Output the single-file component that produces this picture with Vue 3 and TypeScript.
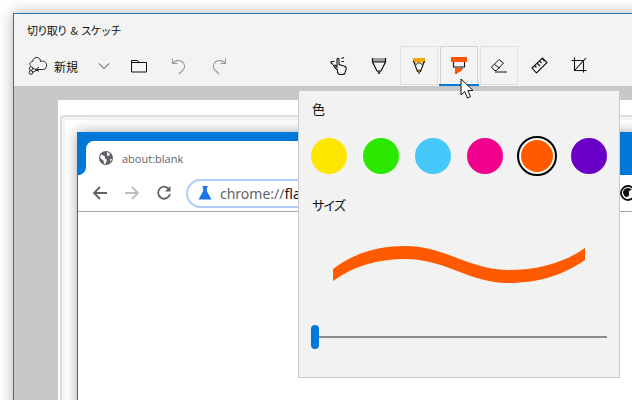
<script setup lang="ts">
const colors: { c: string; sel?: boolean }[] = [
  { c: '#ffe600' },
  { c: '#2ae800' },
  { c: '#45c8fa' },
  { c: '#f0008c' },
  { c: '#ff5a00', sel: true },
  { c: '#6a00c8' },
]
</script>

<template>
  <div class="page">
    <div class="window">
      <header class="head">
        <div class="title">切り取り &amp; スケッチ</div>
        <div class="toolbar">
          <div class="left">
            <svg class="new-icon" width="22" height="20" viewBox="0 0 22 20" fill="none" stroke="#222" stroke-width="1">
              <path d="M3.500 9.500C2 7.500 3.500 5.500 5.500 5.500C6 2.500 8.500 1 10.500 1.500C12.500 2 13.500 3.500 13.500 5.500C16 4.500 19 5.500 19.500 8.500C20 11 18.500 13.500 16.500 13.500H8.500" />
              <path d="M12 11L9 13.500L12 15.500" />
              <circle cx="4" cy="12.500" r="1.800" />
              <circle cx="4" cy="16.500" r="1.800" />
              <path d="M5.500 12L10 14M5.500 16.500L10 14" />
            </svg>
            <span class="new-label">新規</span>
            <div class="cell chev">
              <svg width="12" height="8" viewBox="0 0 12 8" fill="none" stroke="#333"><path d="M1 1.500L6 6.500L11 1.500" /></svg>
            </div>
            <div class="cell">
              <svg width="18" height="14" viewBox="0 0 18 14" fill="none" stroke="#111"><path d="M1.500 13V1.500H7.500L9 3.500H16.500V13ZM1.500 3.500H9" /></svg>
            </div>
            <div class="cell">
              <svg width="16" height="18" viewBox="0 0 16 18" fill="none" stroke="#999" stroke-width="1.100"><path d="M1.500 1.500V6.500H6.500M1.500 6.500C4 3.500 8 2.500 11 4.500C15 7.500 14 11 12 13L8 17" /></svg>
            </div>
            <div class="cell">
              <svg width="16" height="18" viewBox="0 0 16 18" fill="none" stroke="#999" stroke-width="1.100"><path d="M14.500 1.500V6.500H9.500M14.500 6.500C12 3.500 8 2.500 5 4.500C1 7.500 2 11 4 13L8 17" /></svg>
            </div>
          </div>
          <div class="tools">
            <div class="tool">
              <svg width="18" height="18" viewBox="0 0 18 18" fill="none" stroke="#111" stroke-width="1.100"><path d="M7.500 13L4 9.500C3 8.500 4.500 7.500 5.500 8.500L7 10V2.500C7 1 9 1 9 2.500V7.500L14 9C16 9.500 16.500 10.500 16 12.500L15 16C14.500 17.500 13.500 17.500 12.500 17.500H9.500C8.500 17.500 8 16 7.500 15.500ZM1 4.500H4.500M1 4.500C.5 6 2 7 3 7.500M11.500 1.500L14 .5M11.500 4.500H14" /></svg>
            </div>
            <div class="tool">
              <svg width="16" height="18" viewBox="0 0 16 18" fill="none"><rect x="1" y="1" width="14" height="4" fill="#a0a0a0" /><path d="M1.500 1V5L6 14H10L14.500 5V1" stroke="#111" stroke-width="1.200" /><path d="M1.500 5H14.500" stroke="#111" /><path d="M6.500 14H9.500L9 17H7Z" fill="#444" /></svg>
            </div>
            <div class="tool boxed">
              <svg width="14" height="18" viewBox="0 0 14 18" fill="none"><rect x="1" y="1" width="12" height="4.500" fill="#f7a800" /><path d="M1.500 4L5.500 14.500H8.500L12.500 4" stroke="#111" stroke-width="1.100" /><path d="M2 5.500L4 7.500L7 5.500L10 7.500L12 5.500" stroke="#111" stroke-width=".8" /><path d="M5.500 13H8.500L7 17Z" fill="#f7a800" stroke="#111" stroke-width=".6" /></svg>
            </div>
            <div class="tool boxed active">
              <svg width="16" height="18" viewBox="0 0 16 18" fill="none"><rect y="0" width="16" height="5" fill="#ff5500" /><path d="M2.500 5V10H13.500V5" stroke="#111" stroke-width="1.100" /><path d="M5 10.500V17M11 10.500V12" stroke="#111" stroke-width="1" /><path d="M5 11H11V13.500L5 17Z" fill="#ff5500" /></svg>
            </div>
            <div class="tool boxed">
              <svg width="18" height="15" viewBox="0 0 18 15" fill="none" stroke="#111" stroke-width="1"><path d="M1.500 9L9 1.500L13.500 5L6.500 12.500H4.500ZM4.500 6.500L9.500 10M5 14H17" /></svg>
            </div>
            <div class="tool">
              <svg width="17" height="17" viewBox="0 0 17 17" fill="none" stroke="#111" stroke-width="1.100"><path d="M1 11L11.500 1L16 5.500L5.500 16ZM4 9L5.500 10.500M6.500 6.500L9 9M9 4.500L10.500 6M11.500 2L13.500 4" /></svg>
            </div>
            <div class="tool">
              <svg width="16" height="17" viewBox="0 0 16 17" fill="none" stroke="#111" stroke-width="1.100"><path d="M.5 3.500H12.500V15.500M3.500 .5V13.500H15.500M3.500 13.500L15 1" /></svg>
            </div>
          </div>
        </div>
      </header>

      <main class="canvas">
        <div class="sheet">
          <div class="frame">
            <div class="mat">
              <div class="chrome">
                <div class="strip">
                  <div class="tab">
                    <svg width="14" height="14" viewBox="0 0 14 14"><circle cx="7" cy="7" r="7" fill="#5f6368" /><path d="M2 3.500L5.500 5L6 7.500L8 9L6.500 13L5 12.500L4.500 9.500L1 7ZM8 1L11 2.500L10 5L8 4.500Z M11 8L13 8L11.500 11Z" fill="#fff" /></svg>
                    <span class="tab-text">about:blank</span>
                  </div>
                </div>
                <div class="nav">
                  <svg class="nav-icon" width="16" height="16" viewBox="0 0 16 16" fill="none" stroke="#5f6368" stroke-width="1.800"><path d="M15 8H2M8 2L2 8L8 14" /></svg>
                  <svg class="nav-icon" width="16" height="16" viewBox="0 0 16 16" fill="none" stroke="#bdbdbd" stroke-width="1.800"><path d="M1 8H14M8 2L14 8L8 14" /></svg>
                  <svg class="nav-icon" width="16" height="16" viewBox="0 0 16 16" fill="none"><path d="M13.500 5A6 6 0 1 0 14 9" stroke="#5f6368" stroke-width="1.800" /><path d="M14.500 1V6.500H9Z" fill="#5f6368" /></svg>
                  <div class="url">
                    <svg width="14" height="14" viewBox="0 0 14 14"><path d="M4.500 0H9.500V1.500H8.800V5L13.500 13.500H.5L5.200 5V1.500H4.500Z" fill="#1a73e8" /></svg>
                    <span class="url-text"><span class="scheme">chrome://</span>flags</span>
                  </div>
                  <svg class="ext" width="16" height="16" viewBox="0 0 16 16"><circle cx="8" cy="8" r="7" fill="#fff" stroke="#111" stroke-width="1.800" /><path d="M3 8A5 5 0 0 1 12 5C9.500 5 8.500 6 9 8.500C10 11.500 6 13 4.500 11Z" fill="#111" /></svg>
                </div>
                <div class="content"></div>
              </div>
            </div>
          </div>
        </div>
      </main>
    </div>

    <section class="popup">
      <div class="label">色</div>
      <div class="swatches">
        <div v-for="s in colors" :key="s.c" class="swatch" :class="{ selected: s.sel }">
          <span class="dot" :style="{ background: s.c }"></span>
        </div>
      </div>
      <div class="label size-label">サイズ</div>
      <svg class="stroke" width="252" height="42" viewBox="333 244 252 42">
        <path d="M333 269C355 252 380 246 405 246C445 246 470 270 508 270C540 270 565 262 585 248V260C565 274 540 283 508 283C470 283 445 259 405 259C380 259 355 265 333 281Z" fill="#ff5a00" />
      </svg>
      <div class="slider">
        <span class="thumb"></span>
        <span class="track"></span>
      </div>
    </section>

    <svg class="cursor" width="15" height="22" viewBox="0 0 15 22">
      <path d="M1 1V17L4.800 13.500L7.500 20L10.500 18.700L7.800 12.500H13Z" fill="#fff" stroke="#111" stroke-width="1" />
    </svg>
  </div>
</template>

<style>
html, body { margin: 0; background: #fff; }
</style>

<style scoped>
.page {
  position: relative;
  width: 632px;
  height: 400px;
  overflow: hidden;
  background: #fff;
  font-family: "Noto Sans CJK JP", "Noto Sans", sans-serif;
  color: #111;
}
.window {
  position: absolute;
  left: 13px;
  top: 13px;
  width: 640px;
  height: 400px;
  display: flex;
  flex-direction: column;
  border: 1px solid #1f74b8;
  box-shadow: 0 0 14px rgba(0, 0, 0, .3);
}
.head {
  height: 72px;
  flex: none;
  background: #f3f3f3;
  padding-left: 13px;
}
.title {
  font-size: 11px;
  letter-spacing: -1.1px;
  word-spacing: 2.5px;
  line-height: 16px;
  padding-top: 8px;
  height: 16px;
}
.toolbar {
  display: flex;
  margin-top: 8px;
  height: 39px;
}
.left {
  display: flex;
  align-items: center;
  width: 293px;
  height: 40px;
}
.new-icon { flex: none; }
.new-label {
  font-size: 12px;
  margin-left: 5px;
  width: 38px;
  flex: none;
}
.cell {
  width: 40px;
  height: 38px;
  flex: none;
  display: flex;
  align-items: center;
  justify-content: center;
}
.chev { width: 30px; margin-left: -3px; }
.tools { display: flex; }
.tool {
  position: relative;
  width: 38px;
  height: 39px;
  margin-right: 2px;
  box-sizing: border-box;
  display: flex;
  align-items: center;
  justify-content: center;
}
.boxed { border: 1px solid #e0e0e0; }
.active { border-color: #d2d2d2; }
.active::after {
  content: "";
  position: absolute;
  left: -2px;
  right: -2px;
  bottom: -2px;
  height: 2px;
  background: #0078d7;
}
.canvas {
  flex: 1;
  min-height: 0;
  background: #c8c8c8;
  padding: 14px 0 0 44px;
  display: flex;
}
.sheet {
  flex: 1;
  background: #fff;
  padding: 15px 0 0 2px;
  display: flex;
}
.frame {
  flex: 1;
  border: 2px solid #dedede;
  border-right: 0;
  border-bottom: 0;
  border-radius: 4px 0 0 0;
  padding: 3px 0 0 3px;
  background: #f4f4f4;
  display: flex;
}
.mat {
  flex: 1;
  padding: 12px 0 0 12px;
  background: #fff;
  display: flex;
}
.chrome {
  width: 560px;
  flex: none;
  border-left: 1px solid #0078d7;
  display: flex;
  flex-direction: column;
  background: #fff;
  box-shadow: 0 0 12px rgba(0, 0, 0, .35);
}
.strip {
  height: 43px;
  box-sizing: border-box;
  background: #0078d7;
  padding: 9px 0 0 8px;
  flex: none;
}
.tab {
  position: relative;
  width: 300px;
  height: 34px;
  box-sizing: border-box;
  background: #fff;
  border-radius: 8px 0 0 0;
  padding-left: 13px;
  display: flex;
  align-items: center;
}
.tab::before {
  content: "";
  position: absolute;
  left: -8px;
  bottom: 0;
  width: 8px;
  height: 8px;
  background: radial-gradient(circle at 0 0, #0078d7 7.500px, #fff 8.500px);
}
.tab-text {
  font-family: "Open Sans", "Noto Sans", sans-serif;
  font-size: 11px;
  color: #5f6368;
  margin-left: 9px;
}
.nav {
  flex: none;
  height: 37px;
  box-sizing: border-box;
  border-bottom: 1px solid #a6a6a6;
  display: flex;
  align-items: center;
  padding-left: 14px;
  gap: 16px;
}
.nav-icon { flex: none; }
.url {
  flex: 1;
  height: 29px;
  box-sizing: border-box;
  margin-left: -2px;
  border: 2px solid #aecbfa;
  border-radius: 15px;
  padding-left: 10px;
  display: flex;
  align-items: center;
  gap: 8px;
}
.url-text {
  font-family: "Noto Sans", sans-serif;
  font-size: 14px;
  color: #111;
}
.scheme { color: #5f6368; }
.ext { flex: none; margin-right: 2px; }
.content { flex: 1; background: #fff; }
.popup {
  position: absolute;
  left: 298px;
  top: 90px;
  width: 322px;
  height: 288px;
  box-sizing: border-box;
  background: #f2f2f2;
  border: 1px solid #c9c9c9;
  padding: 9px 0 0 12px;
}
.label {
  font-size: 13px;
  line-height: 18px;
  height: 18px;
  margin-left: 1px;
}
.swatches {
  display: flex;
  margin-top: 20px;
  gap: 16px;
  height: 36px;
  align-items: center;
}
.swatch {
  width: 36px;
  height: 36px;
  flex: none;
  display: flex;
  align-items: center;
  justify-content: center;
  position: relative;
}
.dot {
  width: 36px;
  height: 36px;
  border-radius: 50%;
  flex: none;
}
.selected .dot { width: 32px; height: 32px; box-shadow: 0 0 0 1px #fff; }
.selected::after {
  content: "";
  position: absolute;
  left: -2px;
  top: -2px;
  width: 36px;
  height: 36px;
  border: 2px solid #000;
  border-radius: 50%;
}
.size-label { margin-top: 22px; letter-spacing: -2px; }
.stroke {
  display: block;
  margin: 30px 0 0 22px;
}
.slider {
  display: flex;
  align-items: center;
  margin-top: 39px;
  height: 24px;
  width: 296px;
}
.thumb {
  width: 8px;
  height: 24px;
  border-radius: 4px;
  background: #0078d7;
  flex: none;
}
.track {
  flex: 1;
  height: 2px;
  background: #8c8c8c;
}
.cursor {
  position: absolute;
  left: 460px;
  top: 78px;
}
</style>
